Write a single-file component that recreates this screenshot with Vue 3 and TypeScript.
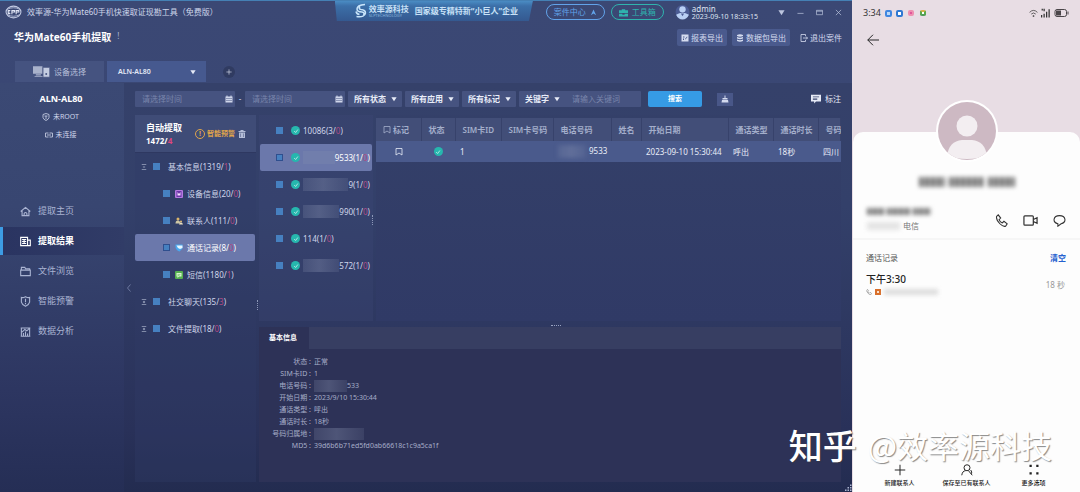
<script setup lang="ts">
import { h, ref } from 'vue'

type IconDef = { box?: string; line?: string; fill?: string }

const icons: Record<string, IconDef> = {
  down: { fill: 'M1 3h14l-7 11z' },
  up: { fill: 'M8 1l6 13-6-4-6 4z' },
  min: { line: 'M1 10h14' },
  max: { line: 'M1 3h14v10H1zM1 5h14' },
  close: { line: 'M2 2l12 12M14 2L2 14' },
  brief: { fill: 'M5 4V2h6v2h5v5H0V4zM0 10h6v2h4v-2h6v5H0z' },
  report: { fill: 'M1 1h14v14H1zM4 5v2h3V5zM4 9v3h2V9zM9 11l4-5-1-1-4 5z' },
  stack: { fill: 'M2 2q6-3 12 0v2q-6 3-12 0zM2 6q6 3 12 0v3q-6 3-12 0zM2 11q6 3 12 0v3q-6 3-12 0z' },
  exit: { line: 'M11 4V1H2v14h9v-3M6 8h9M12 5l3 3-3 3' },
  calendar: { fill: 'M1 3h2V1h2v2h6V1h2v2h2v12H1zM3 6v2h2V6zM7 6v2h2V6zM11 6v2h2V6zM3 10v2h2v-2zM7 10v2h2v-2zM11 10v2h2v-2z' },
  clean: { fill: 'M7 1h2v5h4v3H3V6h4zM2 10h12l1 5H1z' },
  note: { fill: 'M0 1h16v11h-8l-3 3v-3H0zM3 4v1h10V4zM3 7v2h7V7z' },
  home: { line: 'M1 8l7-6 7 6M3 7v7h10V7M6 14v-3q2-3 4 0v3' },
  result: { line: 'M1 2h10v12H1zM11 6h4v8H3M3 5h6M3 8h6M3 11h6M6 5v6' },
  folder: { line: 'M2 5V2h5l1 2h6v2M1 6h14v8H1z' },
  alert: { line: 'M8 1q4 2 6 1v7q-1 4-6 6-5-2-6-6V2q2 1 6-1zM8 4v5M8 10v2' },
  chart: { line: 'M1 3h14M2 3v12M14 3v12M1 15h14M5 14v-4M8 14V8M11 14v-3M3 9l4-4 3 2 4-4' },
  shield: { line: 'M2 3l6-2 6 2v6q-1 4-6 6-5-2-6-6zM5 6h6M8 6v6' },
  link: { line: 'M7 4H1v8h6M9 4h6v8H9M4 8h8' },
  trash: { fill: 'M5 0h6v2h4v2H1V2h4zM2 5h12v11H2zM5 7v7h1V7zM10 7v7h1V7z' },
  flag: { line: 'M2 1h12v13l-6-4-6 4z' },
  tick: { line: 'M3 8l4 4 6-8' },
  minus: { line: 'M2 1h12M2 15h12M5 8h6' },
  plus: { line: 'M2 1h12M2 15h12M5 8h6M8 5v6' },
  add: { line: 'M8 1v14M1 8h14' },
  left: { line: 'M11 1L5 8l6 7' },
  back: { line: 'M16 8H1M8 1L1 8l7 7' },
  phone: { line: 'M2 3l2-2 3 4-2 2q1 3 4 4l2-2 4 3-2 3q-3 1-7-3Q1 7 2 3z' },
  video: { line: 'M2 3h8q1 0 1 1v8q0 1-1 1H2q-1 0-1-1V4q0-1 1-1zM11 7l4-2v6l-4-2' },
  chat: { line: 'M6 12C-1 10 0 2 8 2s9 8 2 10l-4 3z' },
  person: { line: 'M8 1a4 4 0 1 1 0 8 4 4 0 0 1 0-8M1 15q1-6 5-6M10 9l5 6M13 8q2 3 1 5' },
  dots: { fill: 'M2 1h3v3H2zM11 1h3v3h-3zM2 11h3v3H2zM11 11h3v3h-3z' },
  wifi: { line: 'M1 6q7-7 14 0M4 9q4-4 8 0M7 12h2v1H7z' },
  signal: { fill: 'M0 11h2v4H0zM4 9h2v6H4zM8 6h2v9H8zM12 2h2v13h-2zM1 1h2v3H1zM4 1h2v4H4z' },
}

const Icon = (props: { name: string }) => {
  const d = icons[props.name]
  return h('svg', { viewBox: '0 0 16 16', class: 'icon', 'aria-hidden': 'true' }, [
    d.fill ? h('path', { d: d.fill, fill: 'currentColor', 'fill-rule': 'evenodd' }) : null,
    d.line ? h('path', { d: d.line, fill: 'none', stroke: 'currentColor', 'stroke-width': 1.6 }) : null,
  ])
}
Icon.props = ['name']

const nav = [
  { icon: 'home', label: '提取主页' },
  { icon: 'result', label: '提取结果' },
  { icon: 'folder', label: '文件浏览' },
  { icon: 'alert', label: '智能预警' },
  { icon: 'chart', label: '数据分析' },
]
const activeNav = ref('提取结果')

const filters = ['所有状态', '所有应用', '所有标记']

const tree = [
  { label: '基本信息', total: 1319, deleted: 1, open: true },
  { label: '设备信息', total: 20, deleted: 0, kind: 'device' },
  { label: '联系人', total: 111, deleted: 0, kind: 'people' },
  { label: '通话记录', total: 8, deleted: 0, kind: 'calls' },
  { label: '短信', total: 1180, deleted: 1, kind: 'sms' },
  { label: '社交聊天', total: 135, deleted: 3, open: false },
  { label: '文件提取', total: 18, deleted: 0, open: false },
]
const activeTree = ref('通话记录')

const numbers = [
  { tail: '10086', hidden: false, total: 3 },
  { tail: '9533', hidden: true, total: 1 },
  { tail: '9', hidden: true, total: 1 },
  { tail: '990', hidden: true, total: 1 },
  { tail: '114', hidden: false, total: 1 },
  { tail: '572', hidden: true, total: 1 },
]
const activeNumber = ref('9533')

const columns = ['标记', '状态', 'SIM卡ID', 'SIM卡号码', '电话号码', '姓名', '开始日期', '通话类型', '通话时长', '号码']

const details = [
  { label: '状态', value: '正常' },
  { label: 'SIM卡ID', value: '1' },
  { label: '电话号码', value: '533', hidden: 'part' },
  { label: '开始日期', value: '2023/9/10 15:30:44' },
  { label: '通话类型', value: '呼出' },
  { label: '通话时长', value: '18秒' },
  { label: '号码归属地', value: '', hidden: 'all' },
  { label: 'MD5', value: '39d6b6b71ed5fd0ab66618c1c9a5ca1f' },
]
</script>

<template>
  <div class="page">
    <div class="desktop">
      <header class="topbar">
        <div class="brand">
          <svg class="brand-logo" viewBox="0 0 32 26" aria-hidden="true">
            <ellipse cx="16" cy="13" rx="14" ry="11" fill="none" stroke="#c3cbe4" stroke-width="2" />
            <path d="M4 8q12-6 24 0M4 18q12 6 24 0" fill="none" stroke="#c3cbe4" stroke-width="1.5" />
            <path d="M10 10H6v6h4M6 13h3M13 17v-7h5v3h-5M21 17v-7h5v3h-5" fill="none" stroke="#dfe4f4" stroke-width="2" />
          </svg>
          <span>效率源-华为Mate60手机快速取证现勘工具（免费版）</span>
        </div>
        <div class="banner">
          <svg class="swirl" viewBox="0 0 24 32" aria-hidden="true">
            <path d="M20 3Q4 4 4 12q0 6 10 6 6 1 3 6M3 27q17 2 18-7 0-6-9-7-6-1-2-6M2 17q1 5 7 6" fill="none" stroke="#c8e4fa" stroke-width="3" />
          </svg>
          <div class="company">
            <b>效率源科技</b>
            <small>SLPTECHNOLOGY</small>
          </div>
          <b class="slogan">国家级专精特新“小巨人”企业</b>
        </div>
        <div class="account">
          <button class="pill blue">案件中心 <Icon name="up" class="i7" /></button>
          <button class="pill green"><Icon name="brief" class="i9" />工具箱</button>
          <svg class="avatar" viewBox="0 0 28 30" aria-hidden="true">
            <circle cx="14" cy="15" r="13" fill="#4b5c94" />
            <circle cx="14" cy="10" r="6" fill="#b9d0f4" />
            <path d="M2 20q12-7 24 0-4 9-12 9T2 20z" fill="#b9d0f4" />
            <path d="M11 18h6l-3 5z" fill="#4b5c94" />
          </svg>
          <div class="user"><span>admin</span><time>2023-09-10 18:33:15</time></div>
          <div class="window-buttons">
            <button aria-label="菜单"><Icon name="down" class="i7" /></button>
            <button aria-label="最小化"><Icon name="min" class="i7" /></button>
            <button aria-label="最大化"><Icon name="max" class="i7" /></button>
            <button aria-label="关闭"><Icon name="close" class="i7" /></button>
          </div>
        </div>
      </header>

      <div class="case-row">
        <h1>华为Mate60手机提取</h1>
        <span class="mark">!</span>
        <div class="case-actions">
          <button class="soft"><Icon name="report" class="i8" />报表导出</button>
          <button class="soft"><Icon name="stack" class="i8" />数据包导出</button>
          <button class="plain"><Icon name="exit" class="i8" />退出案件</button>
        </div>
      </div>

      <div class="tabs">
        <button class="tab device-tab">
          <svg class="devices" viewBox="0 0 54 38" aria-hidden="true">
            <path d="M0 2h30v24H0zM9 28h16v4H9zM5 33h26v3H5z" fill="#a9b2cb" />
            <path d="M32 6h21v31H32z" fill="#c3cbe0" stroke="#46537f" stroke-width="2" />
            <circle cx="42" cy="27" r="3" fill="#46537f" />
          </svg>
          设备选择
        </button>
        <button class="tab phone-tab"><span>ALN-AL80</span><Icon name="down" class="i6" /></button>
        <button class="add" aria-label="添加"><Icon name="add" class="i6" /></button>
      </div>

      <div class="body">
        <aside class="sidebar">
          <h2>ALN-AL80</h2>
          <p><Icon name="shield" class="i8" />未ROOT</p>
          <p><Icon name="link" class="i8" />未连接</p>
          <nav>
            <a
              v-for="n in nav"
              :key="n.label"
              href="#"
              :class="{ active: n.label === activeNav }"
              @click.prevent="activeNav = n.label"
            ><Icon :name="n.icon" class="i11" />{{ n.label }}</a>
          </nav>
        </aside>
        <button class="collapse" aria-label="收起"><Icon name="left" class="i8" /></button>

        <main class="content">
          <form class="filters" @submit.prevent>
            <label class="field date"><input type="text" placeholder="请选择时间" aria-label="开始时间" /><Icon name="calendar" class="i8" /></label>
            <span class="dash">-</span>
            <label class="field date"><input type="text" placeholder="请选择时间" aria-label="结束时间" /><Icon name="calendar" class="i8" /></label>
            <label v-for="f in filters" :key="f" class="field pick">
              <select :aria-label="f"><option>{{ f }}</option></select><Icon name="down" class="i6" />
            </label>
            <div class="field keyword">
              <label class="pick"><select aria-label="搜索字段"><option>关键字</option></select><Icon name="down" class="i6" /></label>
              <input type="text" placeholder="请输入关键词" aria-label="关键词" />
            </div>
            <button class="search" type="submit">搜索</button>
            <button class="clear" type="reset" aria-label="清除"><Icon name="clean" class="i8" /></button>
            <button class="annotate" type="button"><Icon name="note" class="i10" />标注</button>
          </form>

          <div class="panels">
            <section class="tree">
              <div class="tree-head">
                <div class="summary"><b>自动提取</b><b>1472/<em>4</em></b></div>
                <button class="warn"><i>!</i>智能预警</button>
                <button class="bin" aria-label="删除"><Icon name="trash" class="i8" /></button>
              </div>
              <ul>
                <li
                  v-for="t in tree"
                  :key="t.label"
                  :class="{ child: t.kind, active: t.label === activeTree }"
                  @click="activeTree = t.label"
                >
                  <Icon v-if="!t.kind" :name="t.open ? 'minus' : 'plus'" class="i6" />
                  <input type="checkbox" :id="'t-' + t.label" />
                  <svg v-if="t.kind" class="kind" viewBox="0 0 16 16" aria-hidden="true">
                    <template v-if="t.kind === 'device'">
                      <rect width="16" height="16" rx="2" fill="#b57ae0" />
                      <rect x="3" y="2" width="10" height="12" fill="#6b34a8" />
                      <path d="M5 4l3 4 3-4v7H5z" fill="#f3dfff" />
                    </template>
                    <template v-else-if="t.kind === 'people'">
                      <circle cx="6" cy="4" r="3" fill="#d9b36a" />
                      <path d="M1 13q0-6 5-6 4 0 5 6z" fill="#cfc6a4" />
                      <circle cx="12" cy="9" r="2" fill="#e6c27a" />
                      <path d="M8 15q1-4 4-4t4 4z" fill="#e9dfc0" />
                    </template>
                    <template v-else-if="t.kind === 'calls'">
                      <path d="M1 1h14v8l-6 6q-8-3-8-10z" fill="#4aa8ee" />
                      <path d="M3 3h12v5l-5 2q-5-1-7-7z" fill="#e8f6ff" />
                    </template>
                    <template v-else>
                      <rect width="16" height="16" rx="2" fill="#55b050" />
                      <path d="M3 4h10v7H8l-3 3v-3H3z" fill="#d9f5cf" />
                      <path d="M5 7h6M5 9h4" stroke="#55b050" />
                    </template>
                  </svg>
                  <label :for="'t-' + t.label">{{ t.label }}({{ t.total }}/<em>{{ t.deleted }}</em>)</label>
                </li>
              </ul>
              <span class="grip-v"></span>
            </section>

            <div class="right">
              <div class="upper">
                <section class="numbers">
                  <ul>
                    <li
                      v-for="n in numbers"
                      :key="n.tail"
                      :class="{ active: n.tail === activeNumber }"
                      @click="activeNumber = n.tail"
                    >
                      <input type="checkbox" :id="'n-' + n.tail" />
                      <span class="ok"><Icon name="tick" class="i6" /></span>
                      <label :for="'n-' + n.tail"><i v-if="n.hidden" class="smudge"></i><span>{{ n.tail }}({{ n.total }}/<em>0</em>)</span></label>
                    </li>
                  </ul>
                  <span class="grip-v"></span>
                </section>
                <section class="records">
                  <table>
                    <colgroup>
                      <col v-for="(c, i) in columns" :key="c" :class="'c' + i" />
                    </colgroup>
                    <thead>
                      <tr>
                        <th v-for="(c, i) in columns" :key="c"><Icon v-if="i === 0" name="flag" class="i8" />{{ c }}</th>
                      </tr>
                    </thead>
                    <tbody>
                      <tr>
                        <td class="mid"><Icon name="flag" class="i8" /></td>
                        <td class="mid"><span class="ok"><Icon name="tick" class="i6" /></span></td>
                        <td>1</td>
                        <td></td>
                        <td class="tel"><i class="smudge"></i>9533</td>
                        <td></td>
                        <td>2023-09-10 15:30:44</td>
                        <td>呼出</td>
                        <td>18秒</td>
                        <td>四川</td>
                      </tr>
                    </tbody>
                  </table>
                </section>
              </div>
              <div class="grip-h"></div>
              <section class="detail">
                <div class="detail-head"><h3>基本信息</h3></div>
                <dl>
                  <div v-for="d in details" :key="d.label">
                    <dt>{{ d.label }} :</dt>
                    <dd><i v-if="d.hidden" class="smudge" :class="d.hidden"></i>{{ d.value }}</dd>
                  </div>
                </dl>
              </section>
            </div>
          </div>
        </main>
      </div>
      <svg class="resize" viewBox="0 0 16 16" aria-hidden="true">
        <path d="M12 1h3v3h-3zM12 6h3v3h-3zM12 11h3v3h-3zM7 6h3v3H7zM7 11h3v3H7zM2 11h3v3H2z" fill="#aeb6d2" />
      </svg>
    </div>

    <div class="phone">
      <div class="status">
        <span>3:34</span>
        <i class="app a1"></i><i class="app a2"></i><i class="app a3"></i><i class="app a4"></i>
        <span class="signals">
          <Icon name="wifi" class="i9" />
          <Icon name="signal" class="i10" />
          <svg class="battery" viewBox="0 0 28 16" aria-hidden="true">
            <rect x="1" y="1" width="23" height="14" rx="4" fill="none" stroke="#4a4549" stroke-width="2" />
            <path d="M3 3h10v10H3zM26 5h2v6h-2z" fill="#4a4549" />
          </svg>
        </span>
      </div>
      <button class="back" aria-label="返回"><Icon name="back" class="i12" /></button>
      <div class="sheet">
        <svg class="portrait" viewBox="0 0 62 62" aria-hidden="true">
          <defs><clipPath id="face"><circle cx="31" cy="31" r="29" /></clipPath></defs>
          <circle cx="31" cy="31" r="31" fill="#fff" />
          <circle cx="31" cy="31" r="29" fill="#cdb9c3" />
          <g clip-path="url(#face)" fill="#f3eef1">
            <circle cx="31" cy="26" r="10.500" />
            <path d="M11 56q2-15 15-16h10q13 1 15 16-9 3-20 3t-20-3z" />
          </g>
        </svg>
        <div class="masked large"><i></i><i></i><i></i></div>
        <div class="line">
          <div>
            <div class="masked small"><i></i><i></i><i></i></div>
            <div class="carrier"><i class="place"></i>电信</div>
          </div>
          <div class="contact-actions">
            <button aria-label="拨打电话"><Icon name="phone" class="i13" /></button>
            <button aria-label="视频通话"><Icon name="video" class="i15" /></button>
            <button aria-label="发送消息"><Icon name="chat" class="i13" /></button>
          </div>
        </div>
        <div class="history-head"><span>通话记录</span><button>清空</button></div>
        <div class="call">
          <div>
            <strong>下午3:30</strong>
            <div class="via"><Icon name="phone" class="i6" /><i class="sim"></i><i class="via-number"></i></div>
          </div>
          <span>18 秒</span>
        </div>
        <footer>
          <button><Icon name="add" class="i12" />新建联系人</button>
          <button><Icon name="person" class="i12" />保存至已有联系人</button>
          <button><Icon name="dots" class="i12" />更多选项</button>
        </footer>
      </div>
    </div>
    <div class="watermark"><span>知乎</span><span>@效率源科技</span></div>
  </div>
</template>

<style>
body {
  margin: 0;
}
</style>

<style scoped>
* {
  box-sizing: border-box;
}
.page {
  position: relative;
  display: grid;
  grid-template-columns: minmax(0, 1fr) 228px;
  min-height: 100vh;
  font: 8px/12px "Noto Sans", "Noto Sans CJK SC", sans-serif;
  color: #cfd6ea;
  overflow: hidden;
}
button,
input,
select {
  font: inherit;
  color: inherit;
  background: none;
  border: 0;
  padding: 0;
  margin: 0;
  min-width: 0;
}
button {
  display: flex;
  align-items: center;
  justify-content: center;
  white-space: nowrap;
}
ul {
  list-style: none;
  margin: 0;
  padding: 0;
}
em {
  font-style: normal;
  color: #b04a86;
}
.icon {
  flex: none;
  display: block;
}
.i6 { width: 6px; height: 6px; }
.i7 { width: 7px; height: 7px; }
.i8 { width: 8px; height: 8px; }
.i9 { width: 9px; height: 9px; }
.i10 { width: 10px; height: 10px; }
.i11 { width: 11px; height: 11px; }
.i12 { width: 12px; height: 12px; }
.i13 { width: 13px; height: 13px; }
.i15 { width: 15px; height: 15px; }

.desktop {
  position: relative;
  display: flex;
  flex-direction: column;
  background: linear-gradient(#3b4874 0, #3a4774 20%, #222b50 100%);
}
.topbar {
  display: flex;
  align-items: flex-start;
  height: 24px;
  border-top: 1px solid #4580b4;
}
.brand {
  flex: 1;
  display: flex;
  align-items: center;
  gap: 5px;
  height: 22px;
  padding-left: 5px;
  white-space: nowrap;
}
.brand-logo {
  width: 17px;
  height: 14px;
}
.banner {
  display: flex;
  align-items: center;
  width: 198px;
  height: 20px;
  margin-right: 8px;
  padding-left: 20px;
  background: linear-gradient(#4a8cc4 0, #3c6fa8 25%, #345990 100%);
  clip-path: polygon(0 0, 100% 0, 98% 100%, 1% 100%);
  color: #c8e1f7;
}
.swirl {
  width: 12px;
  height: 16px;
  margin-right: 2px;
}
.company {
  width: 46px;
  line-height: 8px;
}
.company b,
.company small {
  display: block;
}
.company small {
  font-size: 4px;
  line-height: 5px;
  color: #8cb6dc;
}
.slogan {
  white-space: nowrap;
}
.account {
  display: flex;
  align-items: center;
  height: 22px;
  padding-right: 10px;
}
.pill {
  gap: 4px;
  height: 16px;
  border: 1px solid;
  border-radius: 8px;
  margin-right: 6px;
}
.pill.blue {
  width: 59px;
  margin-left: 5px;
  color: #62a3ea;
}
.pill.green {
  width: 53px;
  color: #2fb3ae;
  margin-right: 11px;
}
.avatar {
  width: 15px;
  height: 16px;
}
.user {
  margin-left: 2px;
  line-height: 9px;
  color: #dfe4f2;
}
.user span,
.user time {
  display: block;
}
.user time {
  font-size: 7px;
  line-height: 8px;
}
.window-buttons {
  display: flex;
  gap: 12px;
  margin-left: 20px;
  color: #bcc5de;
}
.case-row {
  display: flex;
  align-items: flex-start;
  height: 37px;
  padding: 5px 10px 0 14px;
}
h1 {
  margin: 0;
  font-size: 10px;
  line-height: 17px;
  color: #fff;
}
.mark {
  margin-left: 6px;
  line-height: 14px;
  color: #aeb8d6;
}
.case-actions {
  display: flex;
  gap: 5px;
  margin-left: auto;
  color: #d5dcef;
}
.case-actions button {
  gap: 2px;
  height: 17px;
}
.case-actions .soft {
  padding: 0 4px;
  border-radius: 2px;
  background: #4a5a8d;
}
.case-actions .plain {
  margin-left: 5px;
}
.tabs {
  display: flex;
  gap: 3px;
  height: 22px;
  padding-left: 15px;
}
.tab {
  height: 21px;
}
.device-tab {
  width: 89px;
  gap: 4px;
  background: #455380;
  color: #b6bfd8;
}
.devices {
  width: 17px;
  height: 13px;
}
.phone-tab {
  width: 99px;
  justify-content: space-between;
  padding: 0 10px 0 11px;
  font-size: 7px;
  font-weight: 600;
  background: #46598f;
  color: #e4e9f6;
}
.add {
  width: 12px;
  height: 12px;
  margin: 5px 0 0 14px;
  border-radius: 50%;
  background: #303b61;
  color: #e4e9f6;
}
.body {
  flex: 1;
  display: flex;
  background: linear-gradient(#35416a 0, #33406a 30%, #293159 85%, #232c50 100%);
}
.sidebar {
  flex: none;
  width: 124px;
  background: linear-gradient(#3b4974 0, #384671 30%, #2d3661 75%, #252e55 100%);
}
h2 {
  margin: 0 0 6px;
  padding: 10px 2px 0 0;
  font-size: 9px;
  line-height: 12px;
  text-align: center;
  color: #fff;
}
.sidebar p {
  display: flex;
  justify-content: center;
  align-items: center;
  gap: 3px;
  margin: 0 0 6px;
  padding-right: 3px;
  font-size: 7px;
  line-height: 12px;
}
.sidebar nav {
  margin-top: 56px;
}
.sidebar nav a {
  display: flex;
  align-items: center;
  gap: 7px;
  height: 28px;
  margin: 2px 0;
  padding-left: 17px;
  border-left: 3px solid transparent;
  font-size: 9px;
  color: #aab4d2;
  text-decoration: none;
}
.sidebar nav a.active {
  border-color: #3d9ce4;
  color: #fff;
  font-weight: 700;
  background: linear-gradient(90deg, #2a3461, #313c67);
}
.collapse {
  width: 9px;
  color: #7b87ad;
}
.content {
  flex: 1;
  min-width: 0;
  display: flex;
  flex-direction: column;
  padding: 8px 11px 10px 2px;
}
.filters {
  display: flex;
  align-items: center;
  gap: 3px;
  height: 16px;
  margin-bottom: 8px;
}
.field {
  display: flex;
  align-items: center;
  height: 16px;
  background: #465380;
  border-radius: 1px;
}
.date {
  flex: 0 1 100px;
  padding: 0 2px 0 7px;
}
.date input,
.keyword input {
  flex: 1;
  width: 0;
}
input::placeholder {
  color: #7985ab;
  opacity: 1;
}
.dash {
  width: 4px;
  text-align: center;
}
.pick {
  display: flex;
  align-items: center;
  color: #e9edf8;
  font-weight: 600;
}
.field.pick {
  flex: none;
  width: 54px;
  padding-left: 6px;
}
select {
  appearance: none;
  flex: none;
  height: 16px;
  margin-right: 5px;
}
.keyword {
  flex: 0 1 122px;
  padding-left: 6px;
}
.keyword input {
  margin-left: 12px;
}
.search {
  flex: none;
  width: 54px;
  height: 16px;
  margin-left: 4px;
  border-radius: 2px;
  background: #369be5;
  color: #fff;
  font-size: 7px;
  font-weight: 700;
}
.clear {
  flex: none;
  width: 16px;
  height: 13px;
  margin-left: 12px;
  background: #495788;
  color: #d3daee;
}
.annotate {
  gap: 4px;
  margin-left: auto;
  color: #e6eaf6;
}
.panels {
  flex: 1;
  display: flex;
  gap: 3px;
}
.tree {
  position: relative;
  flex: none;
  width: 121px;
  background: rgba(50, 60, 102, 0.35);
}
.tree-head {
  display: flex;
  align-items: center;
  height: 38px;
  padding-left: 11px;
  background: #3f4c77;
  border-bottom: 1px solid #2e3861;
}
.summary {
  width: 49px;
  color: #fff;
  line-height: 13px;
}
.summary b {
  display: block;
}
.summary b:first-child {
  font-size: 9px;
}
.summary em {
  color: #e0457f;
}
.warn {
  gap: 2px;
  font-size: 7px;
  font-weight: 700;
  color: #e0a54c;
}
.warn i {
  width: 10px;
  height: 10px;
  border: 1px solid;
  border-radius: 50%;
  font-style: normal;
  line-height: 8px;
}
.bin {
  margin-left: 3px;
  color: #b4bdd8;
}
li {
  display: flex;
  align-items: center;
  height: 27px;
  white-space: nowrap;
}
.tree li {
  padding-left: 6px;
}
.tree li input {
  margin: 0 8px 0 6px;
}
.tree li.child {
  padding-left: 28px;
}
.tree li.child input {
  margin: 0 5px 0 0;
}
li.active {
  border-radius: 2px;
  background: #6b78ab;
  color: #fff;
}
.tree li.active {
  margin-right: 1px;
}
.kind {
  width: 8px;
  height: 8px;
  margin-right: 4px;
}
input[type='checkbox'] {
  appearance: none;
  flex: none;
  width: 7px;
  height: 7px;
  background: #4680c0;
}
li.active input[type='checkbox'] {
  border: 1px solid #2f4f8e;
}
.right {
  flex: 1;
  min-width: 0;
  display: flex;
  flex-direction: column;
}
.upper {
  flex: 1;
  display: flex;
  gap: 3px;
}
.numbers {
  position: relative;
  flex: none;
  width: 114px;
  padding: 2px 0 0 1px;
  background: rgba(62, 74, 118, 0.3);
}
.numbers li {
  padding: 0 2px 0 16px;
  margin-right: 1px;
}
.numbers .ok {
  margin: 0 3px 0 8px;
}
.numbers label {
  flex: 1;
  display: flex;
  align-items: center;
}
.ok {
  display: flex;
  align-items: center;
  justify-content: center;
  flex: none;
  width: 9px;
  height: 9px;
  border-radius: 50%;
  background: #26b7ae;
  color: #fff;
}
.smudge {
  flex: 1;
  height: 13px;
  background: linear-gradient(90deg, rgba(140, 150, 180, 0.2), rgba(140, 150, 180, 0.35) 45%, rgba(140, 150, 180, 0.15));
}
.active .smudge {
  background: rgba(140, 150, 180, 0.2);
}
.grip-v {
  position: absolute;
  right: 0;
  top: 100px;
  height: 10px;
  border-left: 1px dotted #8d97b8;
}
.tree .grip-v {
  right: -2px;
  top: 185px;
}
.records {
  flex: 1;
  min-width: 0;
  overflow: hidden;
  background: linear-gradient(#344069, #303a66);
  padding-top: 3px;
}
table {
  width: 100%;
  table-layout: fixed;
  border-collapse: collapse;
}
.c0, .c7, .c8 { width: 45px; }
.c1 { width: 34px; }
.c2 { width: 46px; }
.c3 { width: 52px; }
.c4 { width: 58px; }
.c5 { width: 30px; }
.c6 { width: 87px; }
th,
td {
  padding: 0 0 0 7px;
  text-align: left;
  white-space: nowrap;
}
th {
  height: 23px;
  font-weight: 600;
  color: #a4aecb;
  background: #424e78;
  border-right: 1px solid #37426b;
}
th .icon {
  display: inline-block;
  margin-right: 2px;
  vertical-align: -1px;
}
td {
  height: 21px;
  padding-left: 5px;
  background: #4a5a8c;
  color: #e9edf8;
}
.mid {
  padding: 0;
}
.mid > * {
  margin: 0 auto;
}
.tel .smudge {
  display: inline-block;
  width: 28px;
  margin-right: 3px;
  vertical-align: middle;
  filter: blur(2px);
}
.grip-h {
  display: flex;
  justify-content: center;
  height: 5px;
  margin-top: 1px;
}
.grip-h::before {
  content: '';
  width: 10px;
  height: 0;
  margin: 3px 0 0 12px;
  border-top: 1px dotted #9aa3c0;
}
.detail {
  padding-bottom: 30px;
  background: #2d3257;
}
.detail-head {
  height: 22px;
  margin-left: 50px;
  background: #373e62;
}
.detail-head h3 {
  margin: 0 0 0 -40px;
  font-size: 7px;
  line-height: 22px;
  color: #fff;
}
dl {
  margin: 7px 0 0;
  font-size: 7px;
  color: #a6adc8;
}
dl div {
  display: flex;
  height: 12px;
}
dt {
  width: 52px;
  text-align: right;
}
dd {
  display: flex;
  align-items: center;
  margin: 0 0 0 3px;
}
dd .smudge {
  flex: none;
  width: 33px;
  height: 12px;
}
dd .smudge.all {
  width: 50px;
}
.resize {
  position: absolute;
  right: 0;
  bottom: 0;
  width: 8px;
  height: 8px;
}

.phone {
  display: flex;
  flex-direction: column;
  background: #e8dde4;
  color: #222;
}
.phone :deep(.icon path[stroke]) {
  stroke-width: 1.3;
}
.status {
  display: flex;
  align-items: center;
  gap: 4px;
  height: 26px;
  padding: 0 11px 0 11px;
  font-size: 9px;
  color: #333;
}
.app {
  width: 7px;
  height: 7px;
  border-radius: 2px;
  border: 2px solid #3f86e0;
}
.a1 { background: #b9d8fa; }
.a2 { background: #fff; border-color: #2f78d2; }
.a3 { width: 6px; height: 6px; background: #e0559a; border-color: #ee8fb0; margin-left: 1px; }
.a4 { width: 6px; height: 6px; background: #fff; border-color: #d9b04a #58a94a #4f9a58; margin-left: 2px; }
.signals {
  display: flex;
  align-items: center;
  gap: 3px;
  margin-left: auto;
}
.battery {
  width: 15px;
  height: 8px;
}
.back {
  width: 12px;
  margin: 8px 0 0 15px;
}
.sheet {
  flex: 1;
  display: flex;
  flex-direction: column;
  margin: 86px 0 0 1px;
  border-radius: 10px 10px 0 0;
  background: #fdfdfd;
}
.portrait {
  display: block;
  width: 62px;
  height: 62px;
  margin: -32px auto 0;
}
.masked {
  display: flex;
  gap: 4px;
}
.masked i {
  flex: 1;
  background: repeating-linear-gradient(90deg, #777 0 4px, #bbb 4px 6px);
}
.masked i:nth-child(2) {
  flex: 1.3;
}
.masked.large {
  width: 96px;
  height: 10px;
  margin: 15px auto 0;
  filter: blur(2px);
}
.masked.small {
  gap: 2px;
  width: 64px;
  height: 7px;
  margin-bottom: 5px;
  filter: blur(2px);
}
.line {
  display: flex;
  justify-content: space-between;
  align-items: center;
  margin-top: 21px;
  padding: 0 14px 0 14px;
}
.carrier {
  display: flex;
  align-items: center;
  gap: 3px;
  color: #777;
}
.place {
  width: 33px;
  height: 8px;
  background: #e4e4e4;
  filter: blur(2px);
}
.contact-actions {
  display: flex;
  gap: 15px;
  color: #333;
}
.history-head {
  display: flex;
  justify-content: space-between;
  margin-top: 6px;
  padding: 12px 14px 0 13px;
  border-top: 2px solid #f6f6f6;
  color: #555;
}
.history-head button {
  color: #2461cf;
  font-weight: 700;
}
.call {
  display: flex;
  justify-content: space-between;
  align-items: center;
  padding: 8px 15px 0 13px;
  color: #999;
}
.call strong {
  display: block;
  font-size: 10px;
  font-weight: 500;
  line-height: 14px;
  color: #222;
}
.via {
  display: flex;
  align-items: center;
  gap: 3px;
  height: 12px;
  color: #666;
}
.sim {
  width: 6px;
  height: 6px;
  border: 2px solid #d9702c;
  background: #fbe0cc;
}
.via-number {
  width: 54px;
  height: 6px;
  background: #ddd;
  filter: blur(2px);
}
footer {
  display: grid;
  grid-template-columns: 1fr 1fr 1fr;
  margin-top: auto;
  padding: 0 13px 3px;
  font-size: 6px;
  font-weight: 500;
  line-height: 12px;
  color: #222;
}
footer button {
  flex-direction: column;
  gap: 1px;
}
.watermark {
  position: absolute;
  right: 28px;
  bottom: 24px;
  display: flex;
  align-items: center;
  gap: 11px;
  font-family: "Noto Sans CJK SC", sans-serif;
  font-size: 31px;
  line-height: 46px;
  color: #fff;
  text-shadow: 1px 1px 1px rgba(60, 60, 60, 0.6);
  pointer-events: none;
}
.watermark span:first-child {
  font-size: 34px;
  font-weight: 500;
}
</style>
